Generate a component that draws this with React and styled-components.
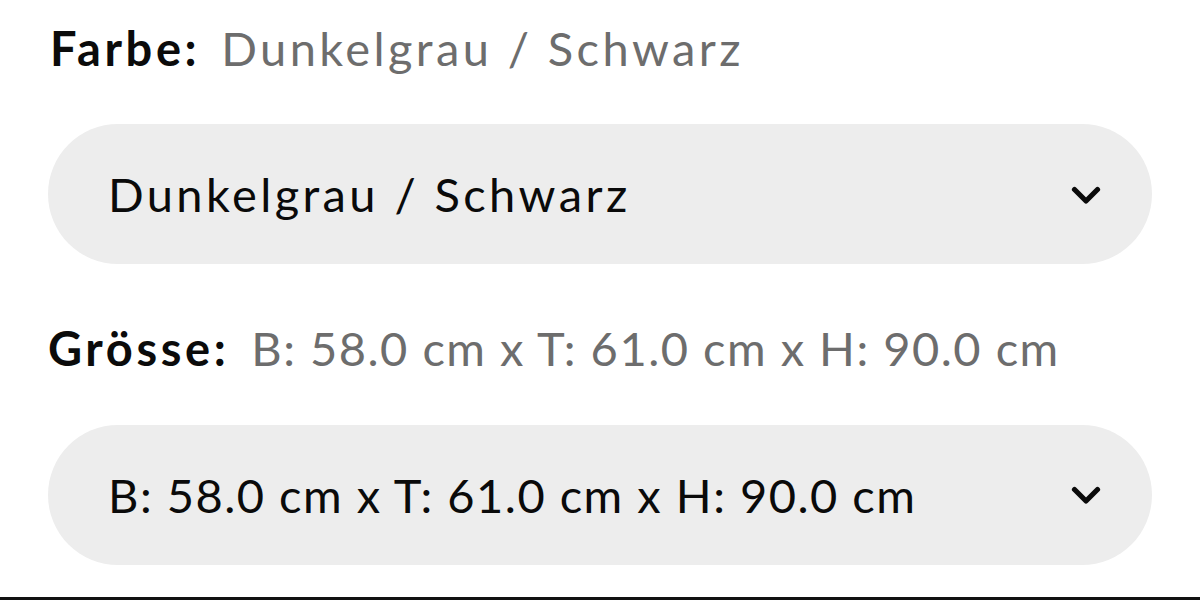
import React from "react";
import styled, { createGlobalStyle } from "styled-components";

const GlobalStyle = createGlobalStyle`
  html, body {
    margin: 0;
    padding: 0;
    background: #ffffff;
  }
  body {
    font-family: Lato, "Noto Sans", sans-serif;
    -webkit-font-smoothing: antialiased;
  }
`;

const Page = styled.div`
  width: 1200px;
  height: 600px;
  display: flex;
  flex-direction: column;
  overflow: hidden;
  background: #fff;
`;

const Form = styled.div`
  display: flex;
  flex-direction: column;
  padding: 20px 48px 0 48px;
`;

const Field = styled.div`
  display: flex;
  flex-direction: column;
  margin-top: ${(p) => p.$offset || 0}px;
`;

const LabelRow = styled.div`
  display: flex;
  align-items: baseline;
  gap: ${(p) => p.$gap}px;
  padding-left: ${(p) => p.$indent}px;
  font-size: 47px;
  line-height: 1.2;
  white-space: nowrap;
`;

const LabelName = styled.span`
  font-weight: 700;
  color: #0b0b0b;
  letter-spacing: 3.6px;
`;

const LabelValue = styled.span`
  font-weight: 400;
  color: #6d6d6d;
  letter-spacing: ${(p) => p.$tracking}px;
`;

const Select = styled.div`
  margin-top: 48px;
  height: 140px;
  border-radius: 70px;
  background: #ededed;
  display: flex;
  align-items: center;
  justify-content: space-between;
  padding: 0 51px 0 60px;
  box-sizing: border-box;
`;

const SelectText = styled.span`
  font-size: 47px;
  color: #0a0a0a;
  white-space: nowrap;
  letter-spacing: ${(p) => p.$tracking}px;
`;

const Chevron = styled.svg`
  width: 30px;
  height: 19px;
  flex: none;
  margin-top: 2px;
`;

const Divider = styled.div`
  margin-top: auto;
  height: 3px;
  background: #111;
  flex: none;
`;

function ChevronIcon() {
  return (
    <Chevron viewBox="0 0 30 19">
      <polyline
        points="3.5,3.5 15,15 26.5,3.5"
        fill="none"
        stroke="#0a0a0a"
        strokeWidth="5.2"
        strokeLinecap="round"
        strokeLinejoin="round"
      />
    </Chevron>
  );
}

function SelectField({ label, value, offset, gap, tracking, indent }) {
  return (
    <Field $offset={offset}>
      <LabelRow $gap={gap} $indent={indent}>
        <LabelName>{label}</LabelName>
        <LabelValue $tracking={tracking}>{value}</LabelValue>
      </LabelRow>
      <Select>
        <SelectText $tracking={tracking}>{value}</SelectText>
        <ChevronIcon />
      </Select>
    </Field>
  );
}

export default function App() {
  return (
    <>
      <GlobalStyle />
      <Page>
        <Form>
          <SelectField
            label="Farbe:"
            value="Dunkelgrau / Schwarz"
            gap={21}
            tracking={3.4}
            indent={2}
          />
          <SelectField
            label="Grösse:"
            value="B: 58.0 cm x T: 61.0 cm x H: 90.0 cm"
            offset={56}
            gap={22}
            tracking={1.5}
            indent={-1}
          />
        </Form>
        <Divider />
      </Page>
    </>
  );
}
